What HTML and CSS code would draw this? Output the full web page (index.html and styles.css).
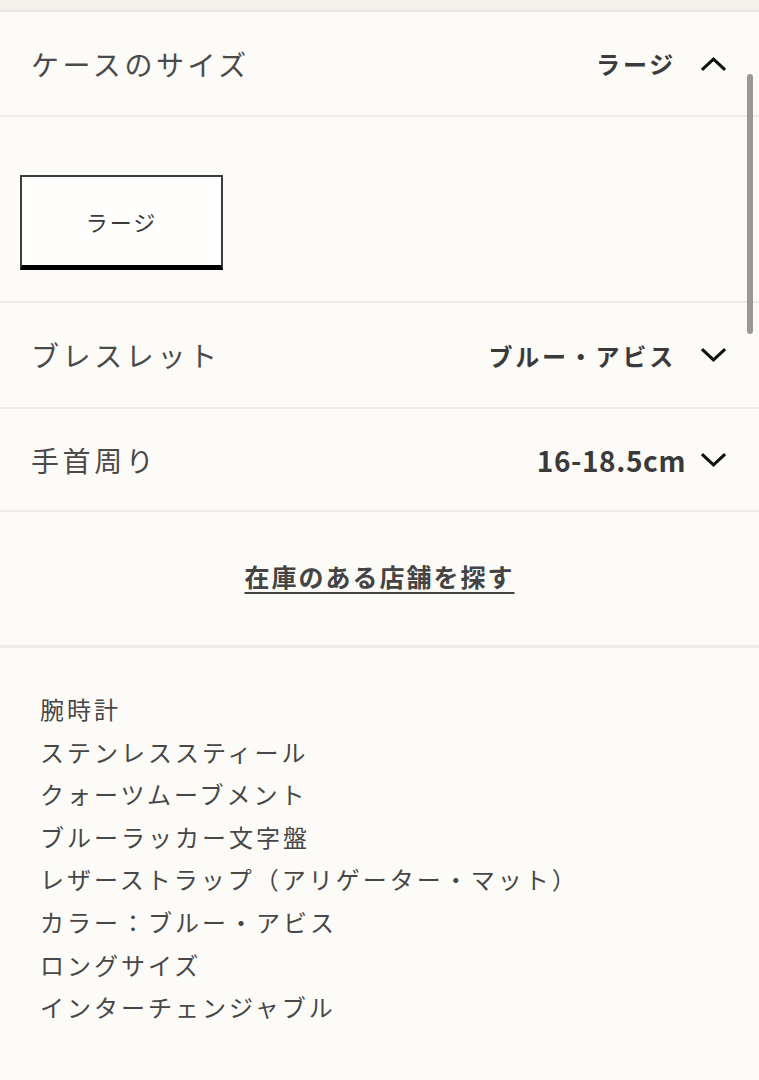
FILE: index.html
```html
<!DOCTYPE html>
<html lang="ja">
<head>
<meta charset="utf-8">
<link rel="stylesheet" href="styles.css">
</head>
<body>
<div class="topbar"></div>
<main class="page">
  <section class="row">
    <span class="label">ケースのサイズ</span>
    <span class="value">ラージ<svg class="chev" viewBox="0 0 28 16"><path d="M2 14 L14 3 L26 14" fill="none" stroke="#111" stroke-width="3.2"/></svg></span>
  </section>
  <section class="options">
    <div class="opt">ラージ</div>
  </section>
  <section class="row">
    <span class="label">ブレスレット</span>
    <span class="value">ブルー・アビス<svg class="chev" viewBox="0 0 28 16"><path d="M2 2 L14 13 L26 2" fill="none" stroke="#111" stroke-width="3.2"/></svg></span>
  </section>
  <section class="row">
    <span class="label">手首周り</span>
    <span class="value latin">16-18.5cm<svg class="chev" viewBox="0 0 28 16"><path d="M2 2 L14 13 L26 2" fill="none" stroke="#111" stroke-width="3.2"/></svg></span>
  </section>
  <section class="store">
    <a class="store-link" href="#">在庫のある店舗を探す</a>
  </section>
  <section class="desc">
    <p>腕時計</p>
    <p>ステンレススティール</p>
    <p>クォーツムーブメント</p>
    <p>ブルーラッカー文字盤</p>
    <p>レザーストラップ（アリゲーター・マット）</p>
    <p>カラー：ブルー・アビス</p>
    <p>ロングサイズ</p>
    <p>インターチェンジャブル</p>
  </section>
</main>
<div class="scrollbar"></div>
</body>
</html>
```
FILE: styles.css
```css
html, body {
  margin: 0;
  padding: 0;
  background: #fdfbf7;
  font-family: "Noto Sans CJK JP", "Noto Sans", sans-serif;
  color: #474747;
}
.topbar {
  height: 10px;
  background: #f3f1ec;
  border-bottom: 2px solid #ebe8e3;
}
.page {
  display: flex;
  flex-direction: column;
}
.row {
  display: flex;
  align-items: center;
  justify-content: space-between;
  padding: 0 32px 0 31px;
  border-bottom: 2px solid #efece7;
}
.row:first-child { height: 103px; }
.row:nth-child(3) { height: 104px; }
.row:nth-child(4) { height: 101px; }
.label {
  font-size: 28px;
  letter-spacing: 3.6px;
  color: #4a4a4a;
}
.value {
  display: flex;
  align-items: center;
  font-size: 24px;
  font-weight: 700;
  letter-spacing: 2.8px;
  color: #3a3a3a;
}
.value.latin {
  font-size: 28px;
  letter-spacing: 0.6px;
}
.chev {
  width: 27px;
  height: 16px;
  margin-left: 24px;
}
.value.latin .chev { margin-left: 14px; }
.options {
  padding: 58px 20px 31px;
  border-bottom: 2px solid #efece7;
}
.opt {
  width: 199px;
  height: 88px;
  box-sizing: content-box;
  border: 2px solid #3d3d3d;
  border-bottom: 5px solid #000;
  background: #fffefc;
  display: flex;
  align-items: center;
  justify-content: center;
  font-size: 22px;
  letter-spacing: 2px;
  color: #3a3a3a;
}
.store {
  height: 136px;
  display: flex;
  justify-content: center;
  padding-top: 46px;
  box-sizing: border-box;
  border-bottom: 3px solid #eeebe6;
}
.store-link {
  font-size: 25px;
  font-weight: 700;
  letter-spacing: 2px;
  color: #444;
  text-decoration: underline;
  text-decoration-thickness: 2px;
  text-underline-offset: 5px;
  height: 36px;
}
.desc {
  padding: 40px 40px 0;
}
.desc p {
  margin: 0;
  font-size: 24px;
  line-height: 42.6px;
  letter-spacing: 3px;
  color: #474747;
}
.scrollbar {
  position: absolute;
  left: 747px;
  top: 74px;
  width: 6px;
  height: 260px;
  border-radius: 3px;
  background: #9a9894;
}
```
